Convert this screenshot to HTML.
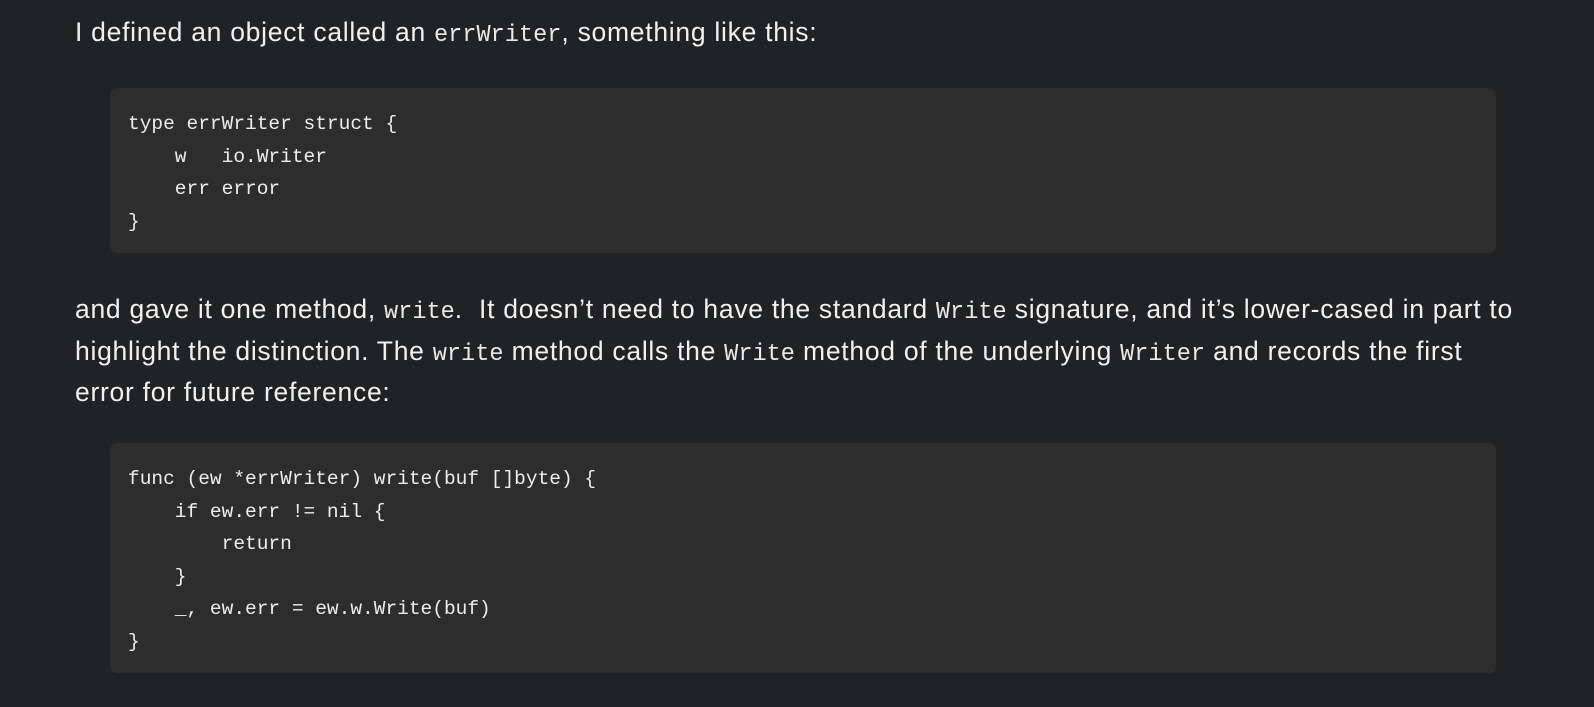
<!DOCTYPE html>
<html><head><meta charset="utf-8"><style>
html,body{margin:0;padding:0;background:#212224;width:1594px;height:707px;overflow:hidden}
body{font-family:"Liberation Sans",sans-serif;color:#f0f0f0;font-size:26.5px}
.p{position:absolute;left:75px;white-space:nowrap;line-height:41.7px;letter-spacing:0.72px}
code{font-family:"Liberation Mono",monospace;font-size:23.6px;color:#e8e8e8;letter-spacing:0;line-height:1}
.blk{position:absolute;left:110px;width:1386px;background:#2d2d2d;border-radius:7px}
pre{margin:0;position:absolute;left:18px;font-family:"Liberation Mono",monospace;font-size:19.5px;line-height:32.5px;color:#ececec}
</style></head><body>
<div class="p" style="top:12px">I defined an object called an <code>errWriter</code>, something like this:</div>
<div class="blk" style="top:88px;height:165px"><pre style="top:20px">type errWriter struct {
    w   io.Writer
    err error
}</pre></div>
<div class="p" style="top:289px">and gave it one method, <code>write</code>.&nbsp; It doesn’t need to have the standard <code>Write</code> signature, and it’s lower-cased in part to<br>highlight the distinction. The <code>write</code> method calls the <code>Write</code> method of the underlying <code>Writer</code> and records the first<br>error for future reference:</div>
<div class="blk" style="top:443px;height:230px"><pre style="top:20px">func (ew *errWriter) write(buf []byte) {
    if ew.err != nil {
        return
    }
    _, ew.err = ew.w.Write(buf)
}</pre></div>
</body></html>
